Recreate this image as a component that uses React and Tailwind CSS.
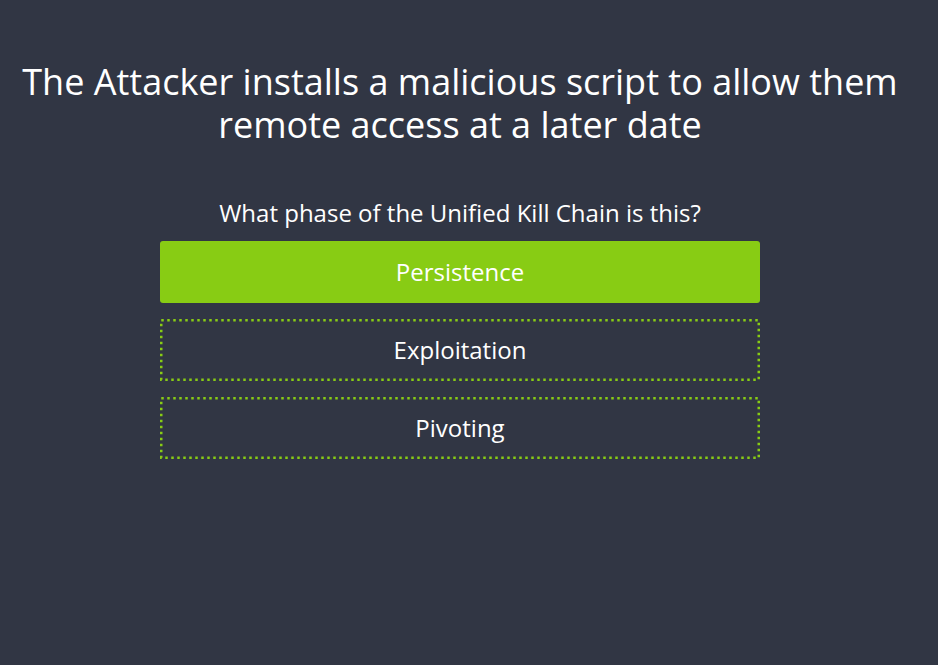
function DottedButton({ children }) {
  return (
    <button className="relative h-[62px] w-full rounded-[3px] text-[24px] text-white">
      <svg className="absolute inset-0 pointer-events-none" width="600" height="62" viewBox="0 0 600 62" fill="none">
        <rect x="1.25" y="1.25" width="597.5" height="59.5" stroke="#88cc14" strokeWidth="2.5" strokeDasharray="2.5 3.5" />
      </svg>
      <span className="relative">{children}</span>
    </button>
  );
}

export default function App() {
  const font = { fontFamily: '"Open Sans", "Noto Sans", sans-serif' };
  return (
    <div className="min-h-[665px] w-full bg-[#313644] text-white" style={font}>
      <div className="w-[920px] flex flex-col items-center pt-[60px]">
        <h1 className="text-[36px] leading-[43px] text-center font-normal px-3 tracking-[0px]">
          The Attacker installs a malicious script to allow them remote access at a later date
        </h1>
        <p className="mt-[52px] text-[24px] leading-[30px]">What phase of the Unified Kill Chain is this?</p>
        <div className="mt-[13px] w-[600px] flex flex-col gap-[16px]">
          <button className="h-[62px] w-full rounded-[3px] bg-[#88cc14] text-[24px] text-white">Persistence</button>
          <DottedButton>Exploitation</DottedButton>
          <DottedButton>Pivoting</DottedButton>
        </div>
      </div>
    </div>
  );
}
